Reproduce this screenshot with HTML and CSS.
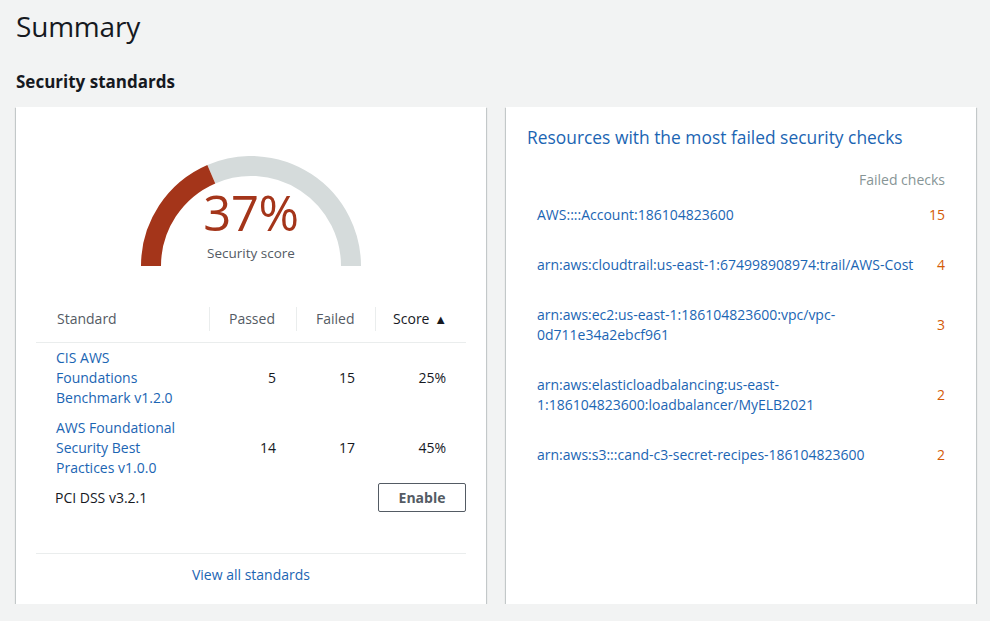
FILE: index.html
```html
<!DOCTYPE html>
<html>
<head>
<meta charset="utf-8">
<link rel="stylesheet" href="styles.css">
</head>
<body>
<div class="page">
  <h1 class="page-title">Summary</h1>
  <h2 class="section-title">Security standards</h2>
  <div class="cards">
    <div class="card standards-card">
      <div class="gauge">
        <svg width="220" height="110" viewBox="0 0 220 110">
          <path d="M 70.3 18.2 A 100 100 0 0 1 210 110" fill="none" stroke="#d5dbdb" stroke-width="20"/>
          <path d="M 10 110 A 100 100 0 0 1 70.3 18.2" fill="none" stroke="#a4351a" stroke-width="20"/>
          <text x="110" y="75" text-anchor="middle" class="gauge-value">37%</text>
          <text x="110" y="102" text-anchor="middle" class="gauge-label">Security score</text>
        </svg>
      </div>
      <table class="std-table">
        <colgroup>
          <col class="c1"><col class="c2"><col class="c3"><col class="c4">
        </colgroup>
        <thead>
          <tr>
            <th>Standard</th>
            <th class="num sep">Passed</th>
            <th class="num sep">Failed</th>
            <th class="num sep sorted">Score <span class="tri">▲</span></th>
          </tr>
        </thead>
        <tbody>
          <tr>
            <td><a>CIS AWS<br>Foundations<br>Benchmark v1.2.0</a></td>
            <td class="num">5</td>
            <td class="num">15</td>
            <td class="num">25%</td>
          </tr>
          <tr>
            <td><a>AWS Foundational<br>Security Best<br>Practices v1.0.0</a></td>
            <td class="num">14</td>
            <td class="num">17</td>
            <td class="num">45%</td>
          </tr>
          <tr class="pci">
            <td class="plain">PCI DSS v3.2.1</td>
            <td></td>
            <td colspan="2" class="btn-cell"><button class="btn">Enable</button></td>
          </tr>
        </tbody>
      </table>
      <div class="card-footer"><a>View all standards</a></div>
    </div>
    <div class="card resources-card">
      <div class="res-title">Resources with the most failed security checks</div>
      <div class="res-head">Failed checks</div>
      <div class="res-row"><a>AWS::::Account:186104823600</a><span class="count">15</span></div>
      <div class="res-row"><a>arn:aws:cloudtrail:us-east-1:674998908974:trail/AWS-Cost</a><span class="count">4</span></div>
      <div class="res-row"><a>arn:aws:ec2:us-east-1:186104823600:vpc/vpc-<br>0d711e34a2ebcf961</a><span class="count">3</span></div>
      <div class="res-row"><a>arn:aws:elasticloadbalancing:us-east-<br>1:186104823600:loadbalancer/MyELB2021</a><span class="count">2</span></div>
      <div class="res-row"><a>arn:aws:s3:::cand-c3-secret-recipes-186104823600</a><span class="count">2</span></div>
    </div>
  </div>
</div>
</body>
</html>
```

FILE: styles.css
```css
html, body {
  margin: 0;
  padding: 0;
  background: #f2f3f3;
  font-family: "Open Sans", "Noto Sans", sans-serif;
  color: #16191f;
}
.page {
  padding: 0 14px 0 16px;
}
.page-title {
  margin: 0;
  padding-top: 8px;
  font-size: 28px;
  font-weight: 400;
  line-height: 36px;
  letter-spacing: -0.2px;
}
.section-title {
  margin: 0;
  padding-top: 27px;
  font-size: 17px;
  font-weight: 700;
  line-height: 22px;
}
.cards {
  margin-top: 14px;
  display: grid;
  grid-template-columns: 470px 470px;
  column-gap: 20px;
}
.card {
  background: #fff;
  height: 497px;
  box-shadow: 0 1px 1px 0 rgba(0,28,36,.3), 1px 1px 1px 0 rgba(0,28,36,.15), -1px 1px 1px 0 rgba(0,28,36,.15);
  box-sizing: border-box;
}
a {
  color: #1b65b3;
  text-decoration: none;
}
.standards-card {
  padding: 0 20px 10px;
  display: flex;
  flex-direction: column;
}
.gauge {
  display: flex;
  justify-content: center;
  padding-top: 49px;
  height: 110px;
}
.gauge svg { display: block; }
.gauge-value {
  font-family: "Open Sans", sans-serif;
  font-size: 49px;
  fill: #a4351a;
  letter-spacing: -0.3px;
}
.gauge-label {
  font-family: "Open Sans", sans-serif;
  font-size: 13.5px;
  fill: #545b64;
}
.std-table {
  margin-top: 30px;
  width: 430px;
  table-layout: fixed;
  border-collapse: collapse;
  font-size: 14px;
  line-height: 20px;
}
.c1 { width: 173px; }
.c2 { width: 87px; }
.c3 { width: 79px; }
.c4 { width: 91px; }
.std-table th {
  font-weight: 400;
  color: #545b64;
  height: 46px;
  padding: 0 20px;
  border-bottom: 1px solid #eaeded;
  position: relative;
  text-align: left;
  white-space: nowrap;
}
.std-table th:first-child { padding-left: 21px; }
.std-table th.num { text-align: right; padding-right: 22px; }
.std-table th.sorted { color: #16191f; padding-left: 8px; padding-right: 19px; }
.std-table th.sep::before {
  content: "";
  position: absolute;
  left: 0;
  top: 11px;
  bottom: 11px;
  border-left: 1px solid #eaeded;
}
.tri { font-size: 13px; margin-left: 1px; }
.std-table td {
  padding: 5px 20px;
  vertical-align: middle;
}
.std-table td.num { text-align: right; }
.std-table td.plain { color: #16191f; padding-left: 19px; }
.std-table tr.pci td { padding-top: 0; }
.btn-cell { text-align: right; padding-right: 0 !important; }
.btn {
  font-family: "Open Sans", sans-serif;
  width: 88px;
  height: 29px;
  background: #fff;
  border: 1px solid #545b64;
  border-radius: 2px;
  color: #545b64;
  font-weight: 700;
  font-size: 14px;
  padding: 0;
}
.card-footer {
  margin-top: auto;
  border-top: 1px solid #eaeded;
  height: 40px;
  display: flex;
  align-items: center;
  justify-content: center;
  font-size: 14px;
}
.resources-card {
  padding: 17px 31px 0 21px;
}
.res-title {
  color: #1b65b3;
  font-size: 17.4px;
  line-height: 26px;
}
.res-head {
  margin-top: 20px;
  text-align: right;
  color: #879596;
  font-size: 14px;
  line-height: 20px;
}
.res-row {
  display: flex;
  justify-content: space-between;
  align-items: center;
  padding: 15px 0 15px 10px;
  font-size: 14px;
  line-height: 20px;
}
.count {
  color: #d45b07;
}
```
